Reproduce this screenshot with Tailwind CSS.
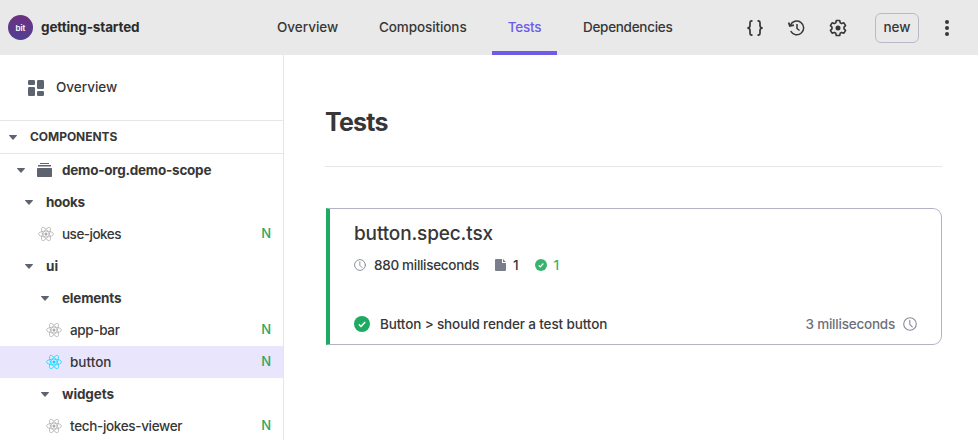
<!DOCTYPE html>
<html lang="en">
<head>
<meta charset="utf-8">
<title>getting-started</title>
<script src="https://cdn.jsdelivr.net/npm/@tailwindcss/browser@4"></script>
</head>
<body class="w-[978px] h-[440px] overflow-hidden bg-white font-['Inter',sans-serif] text-[13.5px] font-medium text-[#373737]">
<svg class="hidden">
  <symbol id="react" viewBox="0 0 16 16"><g fill="none" stroke="currentColor" stroke-width=".7"><ellipse cx="8" cy="8" rx="7.5" ry="2.9"/><ellipse cx="8" cy="8" rx="7.5" ry="2.9" transform="rotate(60 8 8)"/><ellipse cx="8" cy="8" rx="7.5" ry="2.9" transform="rotate(120 8 8)"/></g><circle cx="8" cy="8" r="1.5" fill="currentColor"/></symbol>
  <symbol id="caret" viewBox="0 0 8 5"><path d="M.5 0h7c.4 0 .6.4.3.8L4.500 4.600a.7.7 0 0 1-1 0L.2.800C-.1.400.1 0 .5 0z" fill="#5e6370"/></symbol>
  <symbol id="clock" viewBox="0 0 14 14"><g fill="none" stroke="currentColor" stroke-width="1.100" stroke-linecap="round" stroke-linejoin="round"><circle cx="7" cy="7" r="6.300"/><path d="M6.800 3.300v4L9.300 9.900"/></g></symbol>
  <symbol id="check" viewBox="0 0 16 16"><circle cx="8" cy="8" r="8" fill="currentColor"/><path d="M4.900 8.400l2.100 2.100 4.200-4.500" fill="none" stroke="#fff" stroke-width="1.500"/></symbol>
</svg>
<header class="h-[55px] bg-[#e9e9e9] flex items-center">
  <div class="w-[277px] flex items-center pl-2">
    <div class="size-[25px] rounded-full bg-linear-to-b from-[#6c2f80] to-[#4f4093] flex items-center justify-center text-white text-[8px] font-semibold leading-none">bit</div>
    <span class="ml-2 font-bold text-[#2b2b2b] tracking-[-0.13px]">getting-started</span>
  </div>
  <nav class="flex h-full items-center w-[470px]">
    <span class="w-[102px]">Overview</span>
    <span class="w-[113px] tracking-[-0.1px]">Compositions</span>
    <span class="w-[65px] h-full border-b-4 border-[#6c5ce7] rounded-t-xs text-[#6c5ce7] flex items-center justify-center pt-1 tracking-[-0.2px]">Tests</span>
    <span class="ml-[26px] tracking-[-0.29px]">Dependencies</span>
  </nav>
  <svg class="w-4 h-4" viewBox="0 0 16 16" fill="none" stroke="#373737" stroke-width="1.700"><path d="M5.500.8H5Q3 .8 3 2.800v2.700Q3 8 .3 8 3 8 3 10.500v2.700q0 2 2 2h.5M10.500.8h.5q2 0 2 2v2.700Q13 8 15.700 8 13 8 13 10.500v2.700q0 2-2 2h-.5"/></svg>
  <svg class="w-[17px] h-4 ml-[25px]" viewBox="0 0 17 16" fill="none" stroke="#373737" stroke-width="1.500"><path d="M2.400 5.200A6.900 6.900 0 1 1 2.700 11.200M9 4v4.500l2.500 2"/><path d="M.6 2.500l1.300 3.400 4-.7" stroke-width="1.800"/></svg>
  <svg class="size-[18px] ml-6" viewBox="0 0 18 18" fill="none" stroke="#373737" stroke-width="1.600" stroke-linejoin="round"><path d="M7.300 1.500h3.400l.5 2.200 1.500.9 2.200-.8 1.700 2.900L15 8.200v1.600l1.600 1.500-1.700 2.900-2.200-.8-1.500.9-.5 2.200H7.300l-.5-2.200-1.500-.9-2.200.8-1.700-2.900L3 9.800V8.200L1.400 6.700l1.700-2.900 2.200.8 1.500-.9z"/><circle cx="9" cy="9" r="1.700" fill="#373737"/></svg>
  <button class="ml-7 w-11 h-[30px] rounded-md border border-[#b9bac9]">new</button>
  <svg class="w-1 h-4 ml-[26px]" viewBox="0 0 4 16" fill="#373737"><circle cx="2" cy="2" r="2"/><circle cx="2" cy="8" r="2"/><circle cx="2" cy="14" r="2"/></svg>
</header>
<div class="flex h-[385px]">
  <aside class="w-[284px] border-r border-[#e6e6e6]">
    <div class="h-[65px] flex items-center pl-7 gap-3">
      <svg class="w-4 h-4" viewBox="0 0 16 16" fill="#5e6370"><rect width="7" height="5" rx="1.200"/><rect y="7" width="7" height="9" rx="1.200"/><rect x="9" width="7" height="9" rx="1.200"/><rect x="9" y="11" width="7" height="5" rx="1.200"/></svg>
      <span>Overview</span>
    </div>
    <div class="h-[34px] border-y border-[#e6e6e6] flex items-center pl-[9px]"><svg class="w-2 h-[5px] mr-[13px]"><use href="#caret"/></svg><span class="text-[12px] font-bold tracking-[-0.05px]">COMPONENTS</span></div>
    <div class="h-8 flex items-center pl-[17px] font-bold"><svg class="w-2 h-[5px] mr-3"><use href="#caret"/></svg><svg class="w-[15px] h-4 mr-2.5" viewBox="0 0 15 16" fill="#5e6370"><rect x="3" y="1" width="9" height="1"/><rect x="1" y="3" width="13" height="1.500"/><rect x="0" y="6" width="15" height="9" rx=".8"/></svg><span class="tracking-[-0.24px]">demo-org.demo-scope</span></div>
    <div class="h-8 flex items-center pl-[25px] font-bold"><svg class="w-2 h-[5px] mr-[13px]"><use href="#caret"/></svg><span class="tracking-[-0.3px]">hooks</span></div>
    <div class="h-8 flex items-center pl-[38px] pr-3"><svg class="size-4 mr-2 text-[#aaa]"><use href="#react"/></svg><span class="tracking-[-0.5px]">use-jokes</span><span class="ml-auto text-[#1eaa62] text-[13px]">N</span></div>
    <div class="h-8 flex items-center pl-[25px] font-bold"><svg class="w-2 h-[5px] mr-[13px]"><use href="#caret"/></svg><span>ui</span></div>
    <div class="h-8 flex items-center pl-[41px] font-bold"><svg class="w-2 h-[5px] mr-[13px]"><use href="#caret"/></svg><span class="tracking-[-0.2px]">elements</span></div>
    <div class="h-8 flex items-center pl-[46px] pr-3"><svg class="size-4 mr-2 text-[#aaa]"><use href="#react"/></svg><span class="tracking-[-0.35px]">app-bar</span><span class="ml-auto text-[#1eaa62] text-[13px]">N</span></div>
    <div class="h-8 flex items-center pl-[46px] pr-3 bg-[#e9e5fc]"><svg class="size-4 mr-2 text-[#00d8ff]"><use href="#react"/></svg><span>button</span><span class="ml-auto text-[#1eaa62] text-[13px]">N</span></div>
    <div class="h-8 flex items-center pl-[41px] font-bold"><svg class="w-2 h-[5px] mr-[13px]"><use href="#caret"/></svg><span class="tracking-[-0.1px]">widgets</span></div>
    <div class="h-8 flex items-center pl-[46px] pr-3"><svg class="size-4 mr-2 text-[#aaa]"><use href="#react"/></svg><span class="tracking-[-0.33px]">tech-jokes-viewer</span><span class="ml-auto text-[#1eaa62] text-[13px]">N</span></div>
  </aside>
  <main class="pl-[41px] w-[694px]">
    <div class="w-[617px] h-[112px] border-b border-[#e6e6e6] pt-[51px]"><h1 class="text-[25px] leading-8 font-bold tracking-[-0.8px]">Tests</h1></div>
    <section class="mt-[41px] ml-px w-[616px] h-[137px] border border-l-4 border-[#b3b4c3] border-l-[#1eaa62] rounded-r-[9px] pl-6 pr-6">
      <h2 class="mt-[11px] text-[19px] leading-7 font-medium tracking-[-0.14px]">button.spec.tsx</h2>
      <div class="mt-[7px] h-5 flex items-center">
        <svg class="size-3 text-[#878c9a] mr-2" viewBox="0 0 14 14"><use href="#clock"/></svg><span class="tracking-[-0.3px]">880 milliseconds</span>
        <svg class="w-[11px] h-3 ml-4 mr-[7px]" viewBox="0 0 11 12" fill="#7a7e8c"><path d="M1 0h6v4h4v7a1 1 0 0 1-1 1H1a1 1 0 0 1-1-1V1a1 1 0 0 1 1-1zM8 0l3 3H8z"/></svg><span>1</span>
        <svg class="size-3 text-[#37b36f] ml-4 mr-[7px]"><use href="#check"/></svg><span class="text-[#37b36f]">1</span>
      </div>
      <div class="mt-[39px] h-5 flex items-center">
        <svg class="size-4 text-[#1eaa62] mr-2.5"><use href="#check"/></svg><span class="tracking-[-0.13px]">Button &gt; should render a test button</span>
        <span class="ml-auto text-[#6c707c] tracking-[-0.22px]">3 milliseconds</span><svg class="size-[14px] ml-2 text-[#878c9a]"><use href="#clock"/></svg>
      </div>
    </section>
  </main>
</div>
</body>
</html>
